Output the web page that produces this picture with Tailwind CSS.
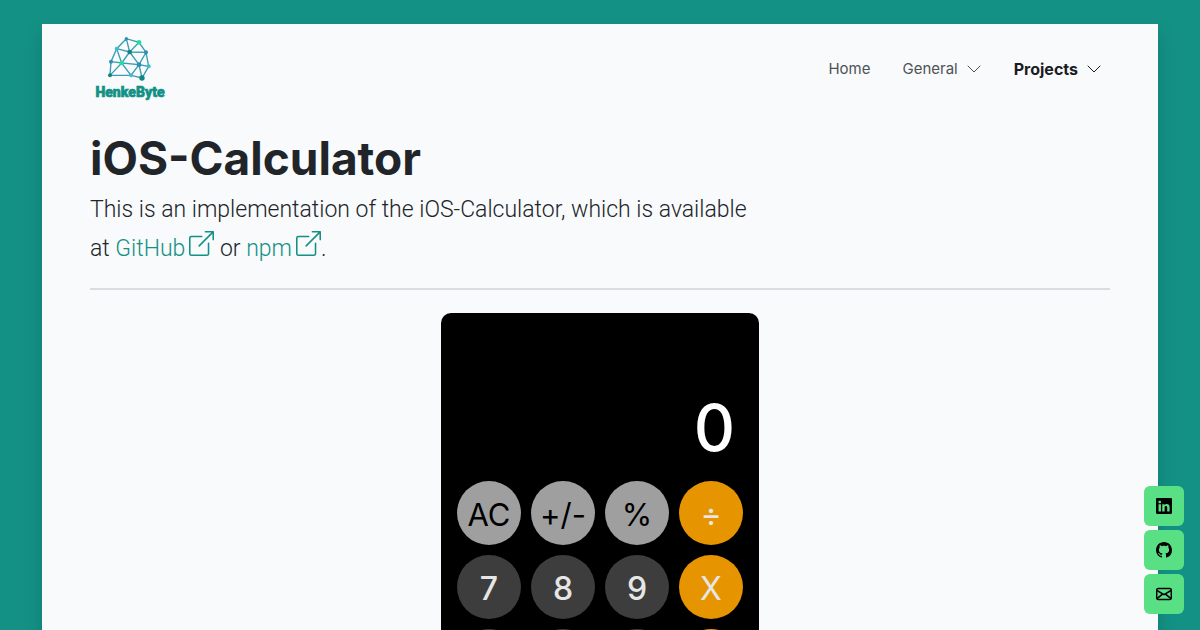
<!DOCTYPE html>
<html lang="en">
<head>
<meta charset="utf-8">
<meta name="viewport" content="width=device-width, initial-scale=1">
<title>iOS-Calculator</title>
<script src="https://cdn.jsdelivr.net/npm/@tailwindcss/browser@4"></script>
</head>
<body class="h-screen overflow-hidden bg-[#149185] font-['Inter',sans-serif] text-[#212529]">
<div class="mx-[42px] mt-6 min-h-screen bg-[#f8fafc] px-12 shadow-[0_8px_16px_rgba(0,0,0,0.15)]">
  <header class="flex h-[88px] items-center justify-between">
    <a href="#" aria-label="HenkeByte" class="block">
      <svg class="h-[70px] w-20" viewBox="30 28 240 210">
        <g fill="none" stroke="#3a9db5" stroke-width="4">
          <path d="M139 45L110 75L93 114L90 155L153 155L186 163L206 128L198 86L177 56ZM139 45L149 85L110 75L125 118L93 114M177 56L149 85L198 86L177 123L206 128M149 85L125 118L177 123ZM90 155L125 118L153 155L177 123L186 163"/>
        </g>
        <g fill="#2f8fae"><circle cx="139" cy="45" r="5"/><circle cx="198" cy="86" r="6"/><circle cx="93" cy="114" r="6"/><circle cx="177" cy="123" r="7"/></g>
        <g fill="#41bfc8"><circle cx="110" cy="75" r="6"/><circle cx="206" cy="128" r="6"/><circle cx="153" cy="155" r="6"/></g>
        <g fill="#1ee29a"><circle cx="177" cy="56" r="7"/><circle cx="125" cy="118" r="7"/></g>
        <g fill="#13857f"><circle cx="149" cy="85" r="7"/><circle cx="90" cy="155" r="6"/><circle cx="186" cy="163" r="8"/></g>
        <text x="150" y="220" text-anchor="middle" class="fill-[#149185] stroke-[#149185] stroke-2 font-['Roboto',sans-serif] text-[42px] font-black">HenkeByte</text>
      </svg>
    </a>
    <nav class="flex items-center gap-8 pt-0.5 pr-2 text-[15px] text-[#4f5255]">
      <a href="#">Home</a>
      <a href="#" class="flex items-center gap-2">General
        <svg class="size-4" viewBox="0 0 16 16" fill="none" stroke="currentColor" stroke-linecap="round" stroke-linejoin="round"><path d="M2 5l6 6 6-6"/></svg></a>
      <a href="#" class="flex items-center gap-2 text-base font-bold text-[#1a1c1f]">Projects
        <svg class="size-4" viewBox="0 0 16 16" fill="none" stroke="currentColor" stroke-linecap="round" stroke-linejoin="round"><path d="M2 5l6 6 6-6"/></svg></a>
    </nav>
  </header>
  <main class="pt-4">
    <h1 class="text-[46px] leading-[60px] font-bold">iOS-Calculator</h1>
    <p class="mt-0.5 max-w-[680px] font-['Roboto',sans-serif] text-[23px] leading-[39px] font-light">This is an implementation of the iOS-Calculator, which is available at
      <a href="#" class="text-[#149185]">GitHub<svg class="ml-1 inline size-[25px] align-baseline" viewBox="0 0 16 16" fill="currentColor"><path d="M8.636 3.5a.5.5 0 0 0-.5-.5H1.5A1.5 1.5 0 0 0 0 4.5v10A1.5 1.5 0 0 0 1.5 16h10a1.5 1.5 0 0 0 1.5-1.5V7.864a.5.5 0 0 0-1 0V14.5a.5.5 0 0 1-.5.5h-10a.5.5 0 0 1-.5-.5v-10a.5.5 0 0 1 .5-.5h6.636a.5.5 0 0 0 .5-.5z"/><path d="M16 .5a.5.5 0 0 0-.5-.5h-5a.5.5 0 0 0 0 1h3.793L6.146 9.146a.5.5 0 1 0 .708.708L15 1.707V5.5a.5.5 0 0 0 1 0z"/></svg></a>
      or <a href="#" class="text-[#149185]">npm<svg class="ml-1 inline size-[25px] align-baseline" viewBox="0 0 16 16" fill="currentColor"><path d="M8.636 3.5a.5.5 0 0 0-.5-.5H1.5A1.5 1.5 0 0 0 0 4.5v10A1.5 1.5 0 0 0 1.5 16h10a1.5 1.5 0 0 0 1.5-1.5V7.864a.5.5 0 0 0-1 0V14.5a.5.5 0 0 1-.5.5h-10a.5.5 0 0 1-.5-.5v-10a.5.5 0 0 1 .5-.5h6.636a.5.5 0 0 0 .5-.5z"/><path d="M16 .5a.5.5 0 0 0-.5-.5h-5a.5.5 0 0 0 0 1h3.793L6.146 9.146a.5.5 0 1 0 .708.708L15 1.707V5.5a.5.5 0 0 0 1 0z"/></svg></a>.</p>
    <hr class="mt-5 mb-[23px] border-t-2 border-[#dbdcdf]">
    <section aria-label="Calculator" class="mx-auto w-[318px] rounded-[10px] bg-black px-4 pb-4">
      <output class="flex h-[168px] items-end justify-end pr-2 pb-[13px] text-[64px] leading-[80px] font-medium text-white">0</output>
      <div class="grid grid-cols-4 gap-[10px] text-[32px] text-[#e6e6e6]">
        <button class="size-16 rounded-full bg-[#9f9f9f] pt-1 text-[31px] text-black">AC</button>
        <button class="size-16 rounded-full bg-[#9f9f9f] pt-1 text-[31px] text-black">+/-</button>
        <button class="size-16 rounded-full bg-[#9f9f9f] pt-1 text-[31px] text-black">%</button>
        <button class="size-16 rounded-full bg-[#e69500] pt-1">÷</button>
        <button class="size-16 rounded-full bg-[#3d3d3d] pt-1 font-medium">7</button>
        <button class="size-16 rounded-full bg-[#3d3d3d] pt-1 font-medium">8</button>
        <button class="size-16 rounded-full bg-[#3d3d3d] pt-1 font-medium">9</button>
        <button class="size-16 rounded-full bg-[#e69500] pt-1">X</button>
        <button aria-label="4" class="size-16 rounded-full bg-[#3d3d3d]"></button>
        <button aria-label="5" class="size-16 rounded-full bg-[#3d3d3d]"></button>
        <button aria-label="6" class="size-16 rounded-full bg-[#3d3d3d]"></button>
        <button aria-label="-" class="size-16 rounded-full bg-[#e69500]"></button>
      </div>
    </section>
  </main>
</div>
<aside class="fixed right-4 bottom-4 flex flex-col gap-1 text-black">
  <a href="#" aria-label="LinkedIn" class="flex size-10 items-center justify-center rounded-md bg-[#59df84]">
    <svg class="size-4" viewBox="0 0 16 16" fill="currentColor"><path d="M0 1.146C0 .513.526 0 1.175 0h13.650C15.474 0 16 .513 16 1.146v13.708c0 .633-.526 1.146-1.175 1.146H1.175C.526 16 0 15.487 0 14.854zm4.943 12.248V6.169H2.542v7.225zm-1.200-8.212c.837 0 1.358-.554 1.358-1.248-.015-.709-.52-1.248-1.342-1.248S2.400 3.226 2.400 3.934c0 .694.521 1.248 1.327 1.248zm4.908 8.212V9.359c0-.216.016-.432.080-.586.173-.431.568-.878 1.232-.878.869 0 1.216.662 1.216 1.634v3.865h2.401V9.250c0-2.220-1.184-3.252-2.764-3.252-1.274 0-1.845.7-2.165 1.193V6.169H6.250c.030.678 0 7.225 0 7.225z"/></svg></a>
  <a href="#" aria-label="GitHub" class="flex size-10 items-center justify-center rounded-md bg-[#59df84]">
    <svg class="size-4" viewBox="0 0 16 16" fill="currentColor"><path d="M8 0C3.580 0 0 3.580 0 8c0 3.540 2.290 6.530 5.470 7.590.4.070.55-.17.55-.38 0-.19-.01-.82-.01-1.490-2.010.37-2.530-.49-2.690-.94-.09-.23-.48-.94-.82-1.130-.28-.15-.68-.52-.01-.53.63-.01 1.080.58 1.230.82.72 1.210 1.870.87 2.330.66.070-.52.28-.87.51-1.070-1.780-.2-3.640-.89-3.640-3.950 0-.87.31-1.590.82-2.150-.08-.2-.36-1.020.08-2.120 0 0 .67-.21 2.200.82.64-.18 1.320-.27 2-.27s1.360.09 2 .27c1.530-1.040 2.200-.82 2.200-.82.44 1.100.16 1.920.08 2.120.51.56.82 1.270.82 2.150 0 3.070-1.870 3.750-3.650 3.950.29.25.54.73.54 1.480 0 1.070-.01 1.930-.01 2.200 0 .21.15.46.55.38A8.010 8.010 0 0 0 16 8c0-4.420-3.580-8-8-8"/></svg></a>
  <a href="#" aria-label="Email" class="flex size-10 items-center justify-center rounded-md bg-[#59df84]">
    <svg class="size-4" viewBox="0 0 16 16" fill="none" stroke="currentColor" stroke-width="1.500" stroke-linejoin="round"><rect x=".7" y="2.500" width="14.600" height="11" rx="1.500"/><path d="M1 4.500l7 4.200 7-4.200M1 12.700l5.500-4.500M15 12.700L9.500 8.200"/></svg></a>
</aside>
</body>
</html>
